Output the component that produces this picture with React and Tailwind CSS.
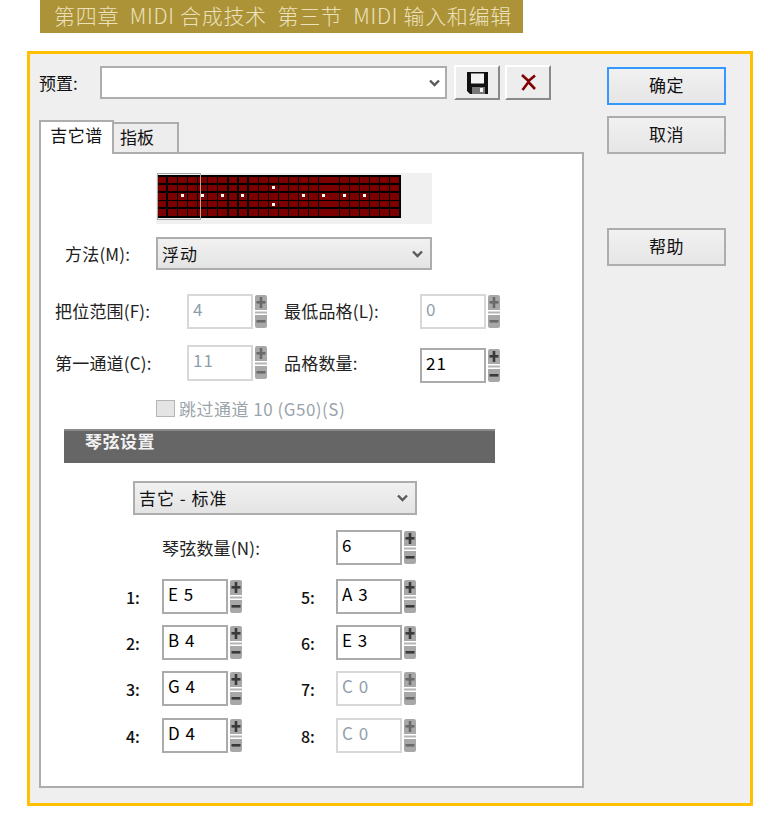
const font = '"Noto Sans CJK SC", "Noto Sans", sans-serif';

function Chevron({ className = "" }) {
  return (
    <svg width="11" height="8" viewBox="0 0 11 8" className={className}>
      <path d="M1 1.5 L5.5 6 L10 1.5" fill="none" stroke="#5a5a5a" strokeWidth="2.4" />
    </svg>
  );
}

function Spinner({ disabled }) {
  const c = disabled ? "#6a6a6a" : "#3a3a3a";
  return (
    <svg width="12" height="33" viewBox="0 0 12 33" className="shrink-0">
      <path d="M2 0 H10 Q12 0 12 2 V15 H0 V2 Q0 0 2 0 Z" fill="#a8a8a8" />
      <rect x="0" y="16.5" width="12" height="2" fill="#b4b4b4" />
      <path d="M0 20 H12 V31 Q12 33 10 33 H2 Q0 33 0 31 Z" fill="#a8a8a8" />
      <rect x="1.5" y="6" width="9" height="2.6" fill={c} />
      <rect x="4.7" y="2" width="2.6" height="11" fill={c} />
      <rect x="1.5" y="25" width="9" height="2.6" fill={c} />
    </svg>
  );
}

function Field({ value, disabled, h = "h-[35px]" }) {
  return (
    <div className="flex items-start gap-[2px] shrink-0">
      <div
        className={`w-[66px] ${h} bg-white pl-[4px] text-[17px] leading-[25px] tracking-[1px] border-2 ${
          disabled ? "text-[#8fa0ad] border-[#d8d8d8]" : "text-black border-[#ababab]"
        }`}
      >
        {value}
      </div>
      <div className="mt-[1px] flex">
        <Spinner disabled={disabled} />
      </div>
    </div>
  );
}

function Select({ text, className }) {
  return (
    <div
      className={`flex items-center justify-between border-2 border-[#adadad] bg-gradient-to-b from-[#f1f1f1] to-[#e4e4e4] pl-[4px] pr-[7px] text-[17px] tracking-[1px] text-[#111] ${className}`}
    >
      <span>{text}</span>
      <Chevron />
    </div>
  );
}

function Fretboard() {
  const cells = [
    [354, 378], [384, 412], [414, 442], [444, 472], [474, 502], [504, 530], [534, 562], [566, 592],
    [596, 622], [626, 654], [656, 684], [686, 714], [716, 744], [746, 774], [776, 804], [808, 834],
    [838, 866], [868, 896], [900, 928], [930, 958], [960, 988], [990, 1018], [1020, 1048], [1050, 1078],
  ].map((c) => [Math.round((c[0] - 348) / 3), Math.round((c[1] - 348) / 3)]);
  const rows = [[4, 10], [12, 18], [20, 27], [28, 34], [36, 43]];
  const dots = [[25, 21], [45, 21], [65, 21], [85, 21], [116, 13], [116, 30], [146, 21], [166, 21], [187, 21], [207, 21]];
  return (
    <svg width="276" height="51" viewBox="0 0 276 51" className="block bg-[#f0f0f0]" shapeRendering="crispEdges">
      <rect x="1" y="2" width="244" height="43" fill="#000" />
      {rows.map((r, i) =>
        cells.map((c, j) => <rect key={`${i}-${j}`} x={c[0]} y={r[0]} width={c[1] - c[0]} height={r[1] - r[0]} fill="#7d0000" />)
      )}
      {dots.map((d, i) => (
        <rect key={i} x={d[0]} y={d[1]} width="3" height="3" fill="#fff" />
      ))}
      <rect x="1.5" y="0.5" width="43" height="46" fill="none" stroke="#a8a8a8" strokeWidth="1" />
    </svg>
  );
}

function StringRow({ mt, left, right }) {
  return (
    <div className={`flex items-start h-[35px] ${mt}`}>
      <div className="ml-[85px] w-[36px] text-[16px] leading-[36px] text-[#111] font-medium">{left[0]}</div>
      <Field value={left[1]} />
      <div className="ml-[59px] w-[35px] text-[16px] leading-[36px] text-[#111] font-medium">{right[0]}</div>
      <Field value={right[1]} disabled={right[2]} />
    </div>
  );
}

function DialogButton({ children, focus, className = "" }) {
  return (
    <div
      className={`w-[119px] h-[38px] flex items-center justify-center border-2 bg-gradient-to-b from-[#f1f1f1] to-[#e6e6e6] pb-[3px] text-[17px] tracking-[0.5px] text-[#111] ${
        focus ? "border-[#3399ff]" : "border-[#adadad]"
      } ${className}`}
    >
      {children}
    </div>
  );
}

function IconButton({ children, className = "" }) {
  return (
    <div
      className={`w-[46px] h-[35px] flex items-center justify-center bg-[#ededed] border-2 border-t-white border-l-white border-r-[#8a8a8a] border-b-[#8a8a8a] ${className}`}
    >
      {children}
    </div>
  );
}

export default function App() {
  return (
    <div className="w-[783px] h-[822px] bg-white overflow-hidden" style={{ fontFamily: font }}>
      <div className="ml-[40px] w-[483px] h-[33px] bg-[#ad9337] pl-[14px] text-[21px] leading-[30px] tracking-[0.7px] font-light text-[#ebe1bd] whitespace-nowrap">
        第四章&nbsp; MIDI 合成技术&nbsp; 第三节&nbsp; MIDI 输入和编辑
      </div>

      <div className="mt-[18px] ml-[27px] w-[726px] h-[755px] border-[3px] border-[#ffc000] bg-[#efefef] flex">
        <div className="ml-[9px] w-[545px] shrink-0">
          <div className="mt-[12px] flex items-start">
            <div className="w-[61px] text-[17px] leading-[33px] text-[#111]">预置:</div>
            <div className="w-[347px] h-[33px] bg-white border-2 border-[#adadad] flex items-center justify-end pr-[5px]">
              <Chevron />
            </div>
            <IconButton className="ml-[7px] -mt-[1px]">
              <svg width="21" height="22" viewBox="0 0 21 22">
                <path d="M0 0 H21 V22 H3 L0 19 Z" fill="#111" />
                <rect x="4" y="1.5" width="13" height="10" fill="#f4f4f4" />
                <rect x="5" y="15" width="13" height="7" fill="#777" />
                <rect x="13" y="16" width="3" height="4" fill="#f4f4f4" />
              </svg>
            </IconButton>
            <IconButton className="ml-[5px] -mt-[1px]">
              <svg width="17" height="17" viewBox="0 0 17 17">
                <path d="M2 1 L8.5 7 L15 1.5 M2.5 16 L8.5 8 L15 15" fill="none" stroke="#800000" strokeWidth="2.6" />
              </svg>
            </IconButton>
          </div>

          <div className="mt-[20px] flex items-start relative z-10 h-[34px]">
            <div className="w-[75px] h-[34px] border-2 border-b-0 border-[#adadad] bg-white text-center text-[17px] tracking-[0.5px] leading-[26px] text-[#111]">
              吉它谱
            </div>
            <div className="mt-[2px] w-[65px] h-[30px] border-2 border-l-0 border-b-0 border-[#adadad] bg-[#ededed] pl-[6px] text-[17px] leading-[26px] text-[#111]">
              指板
            </div>
          </div>

          <div className="-mt-[2px] w-[545px] h-[636px] border-2 border-[#adadad] bg-white text-[#222]">
            <div className="mt-[19px] ml-[115px] relative z-20 w-[276px]">
              <Fretboard />
            </div>

            <div className="mt-[13px] flex items-center">
              <div className="ml-[24px] w-[91px] text-[17px] tracking-[0.2px] text-[#222]">方法(M):</div>
              <Select text="浮动" className="w-[276px] h-[33px]" />
            </div>

            <div className="mt-[24px] flex items-start">
              <div className="ml-[14px] w-[132px] text-[17px] tracking-[0.2px] leading-[33px] text-[#222]">把位范围(F):</div>
              <Field value="4" disabled />
              <div className="ml-[17px] w-[136px] text-[17px] tracking-[0.2px] leading-[33px] text-[#222]">最低品格(L):</div>
              <Field value="0" disabled />
            </div>

            <div className="mt-[16px] flex items-start">
              <div className="ml-[14px] w-[132px] text-[17px] tracking-[0.2px] leading-[36px] text-[#222]">第一通道(C):</div>
              <Field value="11" disabled h="h-[36px]" />
              <div className="ml-[17px] w-[136px] text-[17px] tracking-[0.2px] leading-[36px] text-[#222]">品格数量:</div>
              <div className="mt-[3px]">
                <Field value="21" />
              </div>
            </div>

            <div className="mt-[17px] ml-[115px] flex items-center h-[17px]">
              <div className="w-[19px] h-[17px] bg-[#e4e4e4] border border-[#b5b5b5]" />
              <span className="ml-[4px] text-[17px] tracking-[0.5px] text-[#9aa4ab] whitespace-nowrap">跳过通道 10 (G50)(S)</span>
            </div>

            <div className="mt-[12px] ml-[23px] w-[431px] h-[34px] bg-[#666666] border-t-2 border-[#8a8a8a] pl-[21px] text-[17px] tracking-[0.5px] leading-[20px] font-bold text-[#f2f2f2]">
              琴弦设置
            </div>

            <Select text="吉它 - 标准" className="mt-[18px] ml-[92px] w-[284px] h-[34px]" />

            <div className="mt-[15px] flex items-start h-[35px]">
              <div className="ml-[121px] w-[174px] text-[17px] tracking-[0.2px] leading-[36px] text-[#222]">琴弦数量(N):</div>
              <Field value="6" />
            </div>

            <StringRow mt="mt-[14px]" left={["1:", "E 5"]} right={["5:", "A 3"]} />
            <StringRow mt="mt-[11px]" left={["2:", "B 4"]} right={["6:", "E 3"]} />
            <StringRow mt="mt-[11px]" left={["3:", "G 4"]} right={["7:", "C 0", true]} />
            <StringRow mt="mt-[12px]" left={["4:", "D 4"]} right={["8:", "C 0", true]} />
          </div>
        </div>

        <div className="ml-[23px] w-[119px] shrink-0">
          <DialogButton focus className="mt-[13px]">确定</DialogButton>
          <DialogButton className="mt-[11px]">取消</DialogButton>
          <DialogButton className="mt-[74px]">帮助</DialogButton>
        </div>
      </div>
    </div>
  );
}
